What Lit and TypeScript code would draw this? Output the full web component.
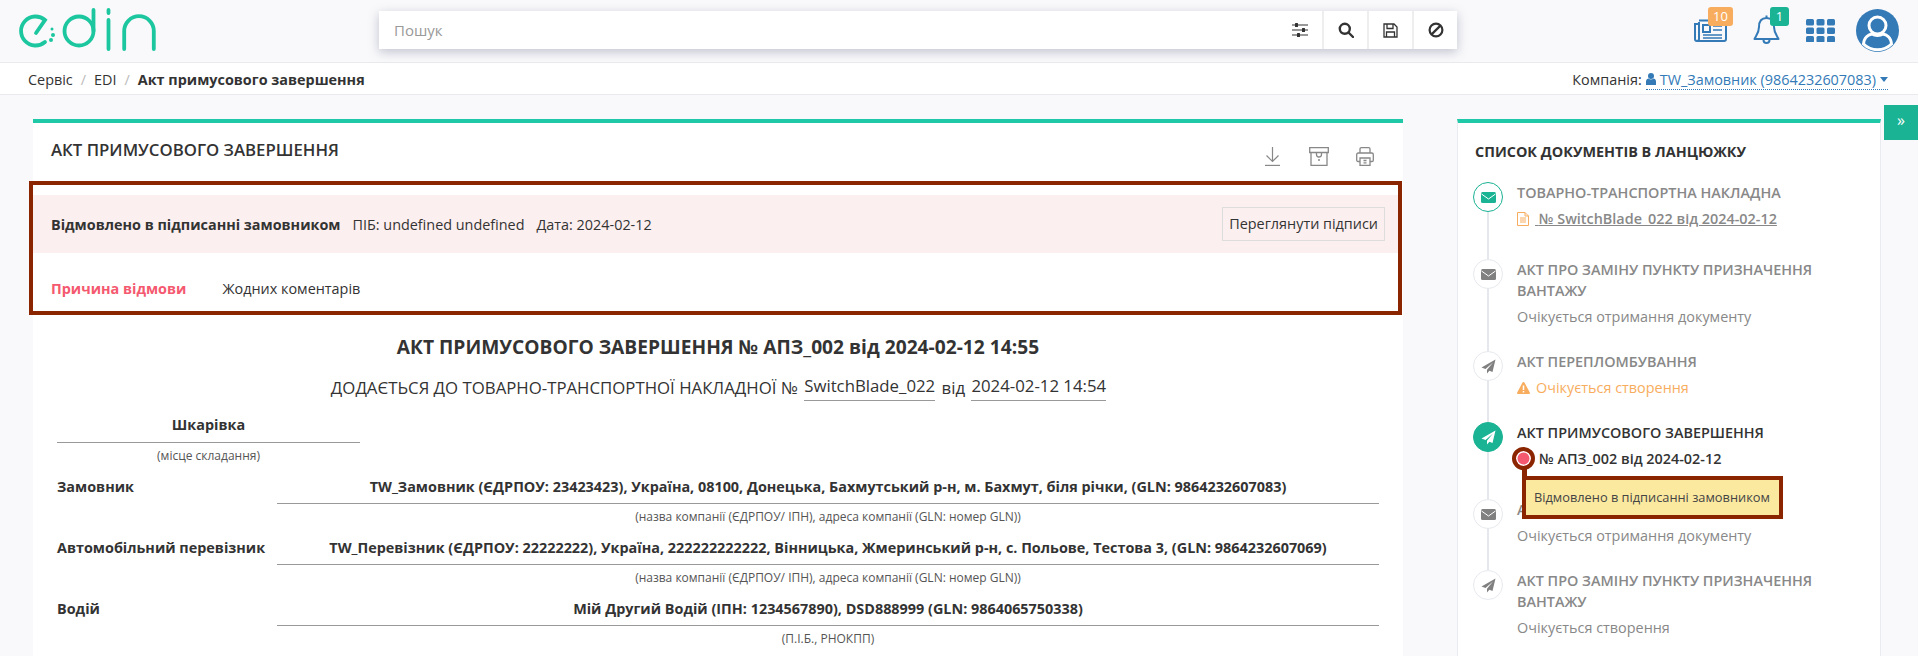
import { LitElement, html, css, svg, nothing, type TemplateResult } from "lit";
import { customElement } from "lit/decorators.js";
import { classMap } from "lit/directives/class-map.js";

const envelope = svg`<rect x="0" y="0" width="15" height="11" rx="1.5" fill="currentColor"></rect><path d="M0.5 2 L7.5 7 L14.5 2" fill="none" stroke="#fff" stroke-width="1"></path>`;
const plane = svg`<path fill="currentColor" d="M14.5 0.5 L0.5 8.5 L4.5 10 L12 3.5 L6 10.8 L6 14.5 L8.4 11.7 L11.5 13 Z"></path>`;

interface ChainItem {
  title: string;
  icon: "mail" | "plane";
  state?: "done" | "active";
  doc?: string;
  status?: string;
  warn?: boolean;
  annotated?: boolean;
}

const chain: ChainItem[] = [
  { title: "Товарно-транспортна накладна", icon: "mail", state: "done", doc: "№ SwitchBlade_022 від 2024-02-12" },
  { title: "Акт про заміну пункту призначення вантажу", icon: "mail", status: "Очікується отримання документу" },
  { title: "Акт переплaмбування".replace("a", "о"), icon: "plane", status: "Очікується створення", warn: true },
  { title: "Акт примусового завершення", icon: "plane", state: "active", annotated: true },
  { title: "Акт про проблему", icon: "mail", status: "Очікується отримання документу" },
  { title: "Акт про заміну пункту призначення вантажу", icon: "plane", status: "Очікується створення" },
];

const parties = [
  {
    label: "Замовник",
    value: "TW_Замовник (ЄДРПОУ: 23423423), Україна, 08100, Донецька, Бахмутський р-н, м. Бахмут, біля річки, (GLN: 9864232607083)",
    hint: "(назва компанії (ЄДРПОУ/ ІПН), адреса компанії (GLN: номер GLN))",
  },
  {
    label: "Автомобільний перевізник",
    value: "TW_Перевізник (ЄДРПОУ: 22222222), Україна, 222222222222, Вінницька, Жмеринський р-н, с. Польове, Тестова 3, (GLN: 9864232607069)",
    hint: "(назва компанії (ЄДРПОУ/ ІПН), адреса компанії (GLN: номер GLN))",
  },
  {
    label: "Водій",
    value: "Мій Другий Водій (ІПН: 1234567890), DSD888999 (GLN: 9864065750338)",
    hint: "(П.І.Б., РНОКПП)",
  },
];

@customElement("app-root")
export class AppRoot extends LitElement {
  static styles = css`
    :host {
      display: block;
      position: relative;
      height: 656px;
      overflow: hidden;
      background: #f9f9fb;
      font-family: "Open Sans", "Liberation Sans", sans-serif;
      font-size: 14.4px;
      color: #333;
    }
    .header {
      display: flex;
      height: 62px;
      box-sizing: border-box;
      padding-left: 10px;
    }
    .logo {
      display: block;
      margin-top: 4px;
      color: #1cc7a0;
    }
    .search {
      display: flex;
      width: 1078px;
      height: 38px;
      margin: 11px 0 0 209px;
      background: #fff;
      box-shadow: 0 3px 10px rgba(90, 95, 125, 0.35);
    }
    .search-input {
      flex: 1;
      padding-left: 15px;
      font-size: 15px;
      line-height: 38px;
      color: #999;
    }
    .search-btn {
      display: flex;
      align-items: center;
      justify-content: center;
      width: 45px;
      box-sizing: border-box;
      border-left: 2px solid #eeeeee;
      color: #333;
    }
    .search-btn.plain {
      border-left: 0;
    }
    .tools {
      display: flex;
      align-items: flex-start;
      margin-left: 237px;
      color: #337ab7;
    }
    .tool {
      position: relative;
      display: block;
    }
    .tool svg {
      display: block;
    }
    .tool-news {
      margin-top: 19px;
    }
    .tool-bell {
      margin: 15px 0 0 26px;
    }
    .tool-grid {
      margin: 19px 0 0 26px;
    }
    .tool-user {
      margin: 9px 0 0 21px;
    }
    .badge {
      position: absolute;
      top: -12px;
      height: 19px;
      border-radius: 3px;
      font-size: 13px;
      line-height: 19px;
      text-align: center;
      color: #fff;
    }
    .badge-orange {
      left: 14px;
      width: 25px;
      background: #f8ad5e;
    }
    .badge-green {
      top: -8px;
      left: 17px;
      width: 19px;
      background: #1ab394;
    }
    .crumbs {
      display: flex;
      align-items: center;
      height: 33px;
      box-sizing: border-box;
      padding: 2px 30px 0 28px;
      background: #fff;
      border-top: 1px solid #e9e9ee;
      border-bottom: 1px solid #e9e9ee;
    }
    .crumb-sep {
      margin: 0 8px;
      color: #bbb;
    }
    .crumb-last {
      font-weight: 700;
    }
    .company {
      display: flex;
      align-items: center;
      margin-left: auto;
    }
    .company-link {
      display: flex;
      align-items: center;
      gap: 4px;
      margin-left: 4px;
      line-height: 19px;
      color: #337ab7;
      border-bottom: 1px dotted #337ab7;
    }
    .main {
      display: flex;
      align-items: flex-start;
      gap: 54px;
      padding: 24px 0 0 33px;
    }
    .card {
      box-sizing: border-box;
      border-top: 4px solid #1fc8a6;
      background: #fff;
    }
    .act {
      width: 1370px;
      height: 560px;
    }
    .act-head {
      display: flex;
      align-items: flex-start;
      justify-content: space-between;
      height: 58px;
      box-sizing: border-box;
      padding: 17px 29px 0 18px;
    }
    .act-title {
      font-size: 16.8px;
      line-height: 20px;
      font-weight: 600;
    }
    .act-actions {
      display: flex;
      align-items: flex-start;
      gap: 27px;
      padding-top: 7px;
      color: #888;
    }
    .act-actions svg:first-child {
      margin-right: 2px;
    }
    .note {
      box-sizing: border-box;
      width: 1373px;
      height: 134px;
      margin-left: -4px;
      padding-top: 10px;
      border: 4px solid #8a2500;
    }
    .note-bar {
      display: flex;
      align-items: center;
      gap: 12px;
      height: 58px;
      padding: 0 13px 0 18px;
      background: #fcefef;
    }
    .note-bar b {
      font-weight: 700;
    }
    .note-btn {
      margin-left: auto;
      padding: 0 6px;
      border: 1px solid #dddddd;
      line-height: 32px;
    }
    .note-reason {
      display: flex;
      align-items: center;
      gap: 36px;
      height: 58px;
      box-sizing: border-box;
      padding: 12px 0 0 18px;
    }
    .note-reason b {
      font-weight: 700;
      color: #f4596f;
    }
    .doc {
      padding: 19px 24px 0 24px;
    }
    .doc-title {
      font-size: 19.2px;
      line-height: 26px;
      font-weight: 700;
      text-align: center;
    }
    .doc-sub {
      margin-top: 14px;
      padding-left: 3px;
      font-size: 16.8px;
      line-height: 26px;
      text-align: center;
    }
    .doc-field {
      display: inline-block;
      margin: 0 2px;
      padding-bottom: 2px;
      border-bottom: 1px solid #999;
      line-height: 24px;
      vertical-align: 2px;
    }
    .place {
      width: 303px;
      margin-top: 14px;
      text-align: center;
    }
    .value {
      height: 27px;
      box-sizing: border-box;
      border-bottom: 1px solid #999;
      font-weight: 700;
      line-height: 19px;
      white-space: nowrap;
      text-align: center;
    }
    .place .value {
      height: 28px;
    }
    .hint {
      height: 34px;
      padding-top: 5px;
      box-sizing: border-box;
      font-size: 12px;
      line-height: 16px;
      text-align: center;
      color: #555;
    }
    .party {
      display: grid;
      grid-template-columns: 220px 1fr;
    }
    .party-label {
      font-weight: 700;
      line-height: 19px;
      white-space: nowrap;
    }
    .chain {
      width: 424px;
      height: 560px;
      padding: 19px 20px 0 17px;
      border-left: 1px solid #e9ebf0;
      border-right: 1px solid #e9ebf0;
    }
    .chain-title {
      margin-bottom: 20px;
      font-size: 14.4px;
      line-height: 20px;
      font-weight: 700;
      text-transform: uppercase;
    }
    .item {
      position: relative;
      display: flex;
      gap: 14px;
      margin-left: -2px;
      padding-bottom: 24px;
      color: #888;
    }
    .item.has-doc {
      padding-bottom: 30px;
    }
    .item::before {
      content: "";
      position: absolute;
      left: 14px;
      top: 0;
      bottom: 0;
      width: 2px;
      background: #e4e7ec;
    }
    .item:last-child::before {
      display: none;
    }
    .dot {
      position: relative;
      display: flex;
      flex: none;
      align-items: center;
      justify-content: center;
      width: 30px;
      height: 30px;
      box-sizing: border-box;
      border: 1px solid #e7e9ee;
      border-radius: 50%;
      background: #fff;
      color: #808080;
    }
    .item.done .dot {
      border-color: #1ab394;
      color: #1ab394;
    }
    .item.active .dot {
      border-color: #1ab394;
      background: #1ab394;
      color: #fff;
    }
    .item-title {
      font-weight: 600;
      line-height: 21px;
      text-transform: uppercase;
    }
    .item.active .item-title {
      color: #333;
    }
    .item-meta {
      position: relative;
      display: flex;
      align-items: center;
      margin-top: 6px;
      line-height: 20px;
    }
    .item-meta svg {
      flex: none;
    }
    .doc-link {
      margin-left: 6px;
      font-weight: 600;
      text-decoration: underline;
    }
    .warn {
      color: #f8ad5e;
      gap: 6px;
    }
    .num {
      font-weight: 600;
      color: #333;
    }
    .mark {
      flex: none;
      width: 23px;
      height: 23px;
      box-sizing: border-box;
      margin: -3px 4px -1px -5px;
      border: 4px solid #8a2500;
      border-radius: 50%;
      background: #f4596f;
      box-shadow: inset 0 0 0 1.5px #fff;
    }
    .mark-stem {
      position: absolute;
      left: 5px;
      top: 19px;
      width: 5px;
      height: 8px;
      background: #8a2500;
    }
    .tip {
      position: absolute;
      left: 5px;
      top: 27px;
      z-index: 1;
      width: 261px;
      height: 43px;
      box-sizing: border-box;
      padding-left: 8px;
      border: 4px solid #8a2500;
      background: #fbe9a0;
      font-size: 12.8px;
      line-height: 35px;
      white-space: nowrap;
      color: #444;
    }
    .toggle {
      position: absolute;
      top: 105px;
      right: 0;
      width: 34px;
      height: 35px;
      background: #1ab394;
      color: #fff;
      font-size: 16px;
      line-height: 30px;
      text-align: center;
    }
  `;

  private renderLogo(): TemplateResult {
    return html`<svg class="logo" width="160" height="52" viewBox="0 0 160 52" fill="none" stroke="currentColor" stroke-width="3.8" stroke-linecap="round">
      <path d="M26 29 L35 16 A14.5 14.5 0 1 0 35 38"></path>
      <g fill="currentColor" stroke="none">
        <circle cx="42" cy="25" r="1.5"></circle>
        <circle cx="43" cy="31" r="2"></circle>
        <circle cx="41" cy="36" r="2"></circle>
      </g>
      <circle cx="69" cy="27" r="14.5"></circle>
      <path d="M83.5 6 V27"></path>
      <path d="M98.5 6 V9"></path>
      <path d="M98.5 16 V45"></path>
      <path d="M114.2 45 V27 A14.8 14.8 0 0 1 143.8 27 V45"></path>
    </svg>`;
  }

  private renderSearch(): TemplateResult {
    return html`<div class="search">
      <div class="search-input">Пошук</div>
      <div class="search-btn plain">
        <svg width="16" height="14" viewBox="0 0 16 14" fill="currentColor">
          <path d="M0 1.5h16v1H0zM0 6.5h16v1H0zM0 11.5h16v1H0z"></path>
          <rect x="3" y="0" width="3" height="4" rx="0.5"></rect>
          <rect x="10" y="5" width="3" height="4" rx="0.5"></rect>
          <rect x="5" y="10" width="3" height="4" rx="0.5"></rect>
        </svg>
      </div>
      <div class="search-btn">
        <svg width="16" height="16" viewBox="0 0 16 16" fill="none" stroke="currentColor" stroke-width="2.4">
          <circle cx="6.8" cy="6.8" r="5"></circle>
          <path d="M10.5 10.5 L15 15" stroke-linecap="round"></path>
        </svg>
      </div>
      <div class="search-btn">
        <svg width="15" height="15" viewBox="0 0 15 15" fill="none" stroke="currentColor" stroke-width="1.3">
          <path d="M1 1 H11 L14 4 V14 H1 Z"></path>
          <path d="M4 1 V5.5 H10 V1"></path>
          <path d="M3.5 14 V9 H11.5 V14"></path>
        </svg>
      </div>
      <div class="search-btn">
        <svg width="16" height="16" viewBox="0 0 16 16" fill="none" stroke="currentColor" stroke-width="2.2">
          <circle cx="8" cy="8" r="6.4"></circle>
          <path d="M3.6 12.4 L12.4 3.6"></path>
        </svg>
      </div>
    </div>`;
  }

  private renderTools(): TemplateResult {
    return html`<div class="tools">
      <div class="tool tool-news">
        <svg width="33" height="23" viewBox="0 0 33 23" fill="none" stroke="currentColor" stroke-width="2">
          <path d="M5 3 V20 A2 2 0 0 1 1 20 V5 H5"></path>
          <path d="M5 1.5 H32 V20 A2 2 0 0 1 30 22 H3"></path>
          <rect x="9" y="6" width="7" height="7"></rect>
          <path d="M19 7 H28 M19 11 H28 M9 16 H28 M9 19 H28" stroke-width="1.6"></path>
        </svg>
        <span class="badge badge-orange">10</span>
      </div>
      <div class="tool tool-bell">
        <svg width="27" height="29" viewBox="0 0 27 29" fill="none" stroke="currentColor" stroke-width="2">
          <path d="M13.5 3 C8 3 6 7 6 12 C6 18 3 21 1.5 24 H25.5 C24 21 21 18 21 12 C21 7 19 3 13.5 3 Z" stroke-linejoin="round"></path>
          <path d="M10.5 25 A3 3 0 0 0 16.5 25"></path>
          <path d="M13.5 0.5 V3"></path>
        </svg>
        <span class="badge badge-green">1</span>
      </div>
      <div class="tool tool-grid">
        <svg width="29" height="23" viewBox="0 0 29 23" fill="currentColor">
          ${[0, 8.5, 17].flatMap((y) =>
            [0, 10.5, 21].map((x) => svg`<rect x=${x} y=${y} width="8" height="6.5" rx="1.5"></rect>`),
          )}
        </svg>
      </div>
      <div class="tool tool-user">
        <svg width="43" height="43" viewBox="0 0 43 43">
          <circle cx="21.5" cy="21.5" r="21.5" fill="currentColor"></circle>
          <circle cx="21.5" cy="16.5" r="8.5" fill="none" stroke="#fff" stroke-width="3"></circle>
          <path d="M7.5 35 C8 28 13 25.5 16 25 C19 27 24 27 27 25 C30 25.5 35 28 35.5 35 A20 20 0 0 1 7.5 35 Z" fill="none" stroke="#fff" stroke-width="3"></path>
        </svg>
      </div>
    </div>`;
  }

  private renderCrumbs(): TemplateResult {
    return html`<div class="crumbs">
      <span>Сервіс</span><span class="crumb-sep">/</span>
      <span>EDI</span><span class="crumb-sep">/</span>
      <span class="crumb-last">Акт примусового завершення</span>
      <div class="company">
        Компанія:
        <span class="company-link">
          <svg width="10" height="12" viewBox="0 0 10 12" fill="currentColor">
            <circle cx="5" cy="3" r="3"></circle>
            <path d="M0 12 V8.5 C0 6.5 1.5 5.5 2.5 5.5 C4 6.7 6 6.7 7.5 5.5 C8.5 5.5 10 6.5 10 8.5 V12 Z"></path>
          </svg>
          TW_Замовник (9864232607083)
          <svg width="8" height="5" viewBox="0 0 8 5" fill="currentColor"><path d="M0 0 H8 L4 5 Z"></path></svg>
        </span>
      </div>
    </div>`;
  }

  private renderAct(): TemplateResult {
    return html`<section class="card act">
      <div class="act-head">
        <div class="act-title">АКТ ПРИМУСОВОГО ЗАВЕРШЕННЯ</div>
        <div class="act-actions">
          <svg width="15" height="19" viewBox="0 0 15 19" fill="none" stroke="currentColor" stroke-width="1.2">
            <path d="M7.5 0 V14 M1.5 8.5 L7.5 14.5 L13.5 8.5"></path>
            <path d="M0 18.4 H15"></path>
          </svg>
          <svg width="20" height="19" viewBox="0 0 20 19" fill="none" stroke="currentColor" stroke-width="1.3">
            <path d="M0.7 0.7 H19.3 V5.5 H0.7 Z"></path>
            <path d="M2 5.5 V18.3 H18 V5.5"></path>
            <path d="M7.5 5.5 V7.5 A2.5 2.5 0 0 0 12.5 7.5 V5.5"></path>
            <path d="M9 13 H11"></path>
          </svg>
          <svg width="18" height="19" viewBox="0 0 18 19" fill="none" stroke="currentColor" stroke-width="1.3">
            <path d="M4 6 V2 A1.3 1.3 0 0 1 5.3 0.7 H12.7 A1.3 1.3 0 0 1 14 2 V6"></path>
            <path d="M4 14.5 H2 A1.3 1.3 0 0 1 0.7 13.2 V7.5 A1.5 1.5 0 0 1 2.2 6 H15.8 A1.5 1.5 0 0 1 17.3 7.5 V13.2 A1.3 1.3 0 0 1 16 14.5 H14"></path>
            <path d="M4 11 H14 V18.3 H4 Z"></path>
            <path d="M7.5 13.5 H10.5 M7.5 15.8 H10.5"></path>
          </svg>
        </div>
      </div>
      <div class="note">
        <div class="note-bar">
          <b>Відмовлено в підписанні замовником</b>
          <span>ПІБ: undefined undefined</span>
          <span>Дата: 2024-02-12</span>
          <span class="note-btn">Переглянути підписи</span>
        </div>
        <div class="note-reason">
          <b>Причина відмови</b>
          <span>Жодних коментарів</span>
        </div>
      </div>
      <div class="doc">
        <div class="doc-title">АКТ ПРИМУСОВОГО ЗАВЕРШЕННЯ № АПЗ_002 від 2024-02-12 14:55</div>
        <div class="doc-sub">
          ДОДАЄТЬСЯ ДО ТОВАРНО-ТРАНСПОРТНОЇ НАКЛАДНОЇ №
          <span class="doc-field">SwitchBlade_022</span>
          від
          <span class="doc-field">2024-02-12 14:54</span>
        </div>
        <div class="place">
          <div class="value">Шкарівка</div>
          <div class="hint">(місце складання)</div>
        </div>
        ${parties.map(
          (p) => html`<div class="party">
            <div class="party-label">${p.label}</div>
            <div>
              <div class="value">${p.value}</div>
              <div class="hint">${p.hint}</div>
            </div>
          </div>`,
        )}
      </div>
    </section>`;
  }

  private renderMeta(item: ChainItem) {
    if (item.doc) {
      return html`<div class="item-meta">
        <svg width="12" height="14" viewBox="0 0 12 14" fill="none" stroke="#f8ad5e" stroke-width="1">
          <path d="M0.5 0.5 H8 L11.5 4 V13.5 H0.5 Z M8 0.5 V4 H11.5"></path>
          <path d="M3 6 H9 M3 8 H9 M3 10 H9"></path>
        </svg>
        <span class="doc-link">&nbsp;${item.doc}</span>
      </div>`;
    }
    if (item.annotated) {
      return html`<div class="item-meta">
        <span class="mark"></span>
        <span class="num">№ АПЗ_002 від 2024-02-12</span>
        <span class="mark-stem"></span>
        <div class="tip">Відмовлено в підписанні замовником</div>
      </div>`;
    }
    if (item.warn) {
      return html`<div class="item-meta warn">
        <svg width="13" height="12" viewBox="0 0 13 12">
          <path fill="#f8ad5e" d="M6.5 0 C7 0 7.3 0.3 7.5 0.6 L12.8 10.4 C13.2 11.1 12.7 12 11.9 12 H1.1 C0.3 12 -0.2 11.1 0.2 10.4 L5.5 0.6 C5.7 0.3 6 0 6.5 0 Z"></path>
          <path stroke="#fff" stroke-width="1.5" d="M6.5 3.5 V8 M6.5 9 V10.5"></path>
        </svg>
        <span>${item.status}</span>
      </div>`;
    }
    return item.status ? html`<div class="item-meta">${item.status}</div>` : nothing;
  }

  private renderChain(): TemplateResult {
    return html`<aside class="card chain">
      <div class="chain-title">Список документів в ланцюжку</div>
      ${chain.map(
        (item) => html`<div
          class=${classMap({
            item: true,
            done: item.state === "done",
            active: item.state === "active",
            "has-doc": !!item.doc || !!item.annotated,
          })}
        >
          <span class="dot">
            ${item.icon === "mail"
              ? html`<svg width="15" height="11" viewBox="0 0 15 11">${envelope}</svg>`
              : html`<svg width="15" height="15" viewBox="0 0 15 15">${plane}</svg>`}
          </span>
          <div>
            <div class="item-title">${item.title}</div>
            ${this.renderMeta(item)}
          </div>
        </div>`,
      )}
    </aside>`;
  }

  render(): TemplateResult {
    return html`
      <header class="header">${this.renderLogo()} ${this.renderSearch()} ${this.renderTools()}</header>
      ${this.renderCrumbs()}
      <main class="main">${this.renderAct()} ${this.renderChain()}</main>
      <div class="toggle">»</div>
    `;
  }
}
